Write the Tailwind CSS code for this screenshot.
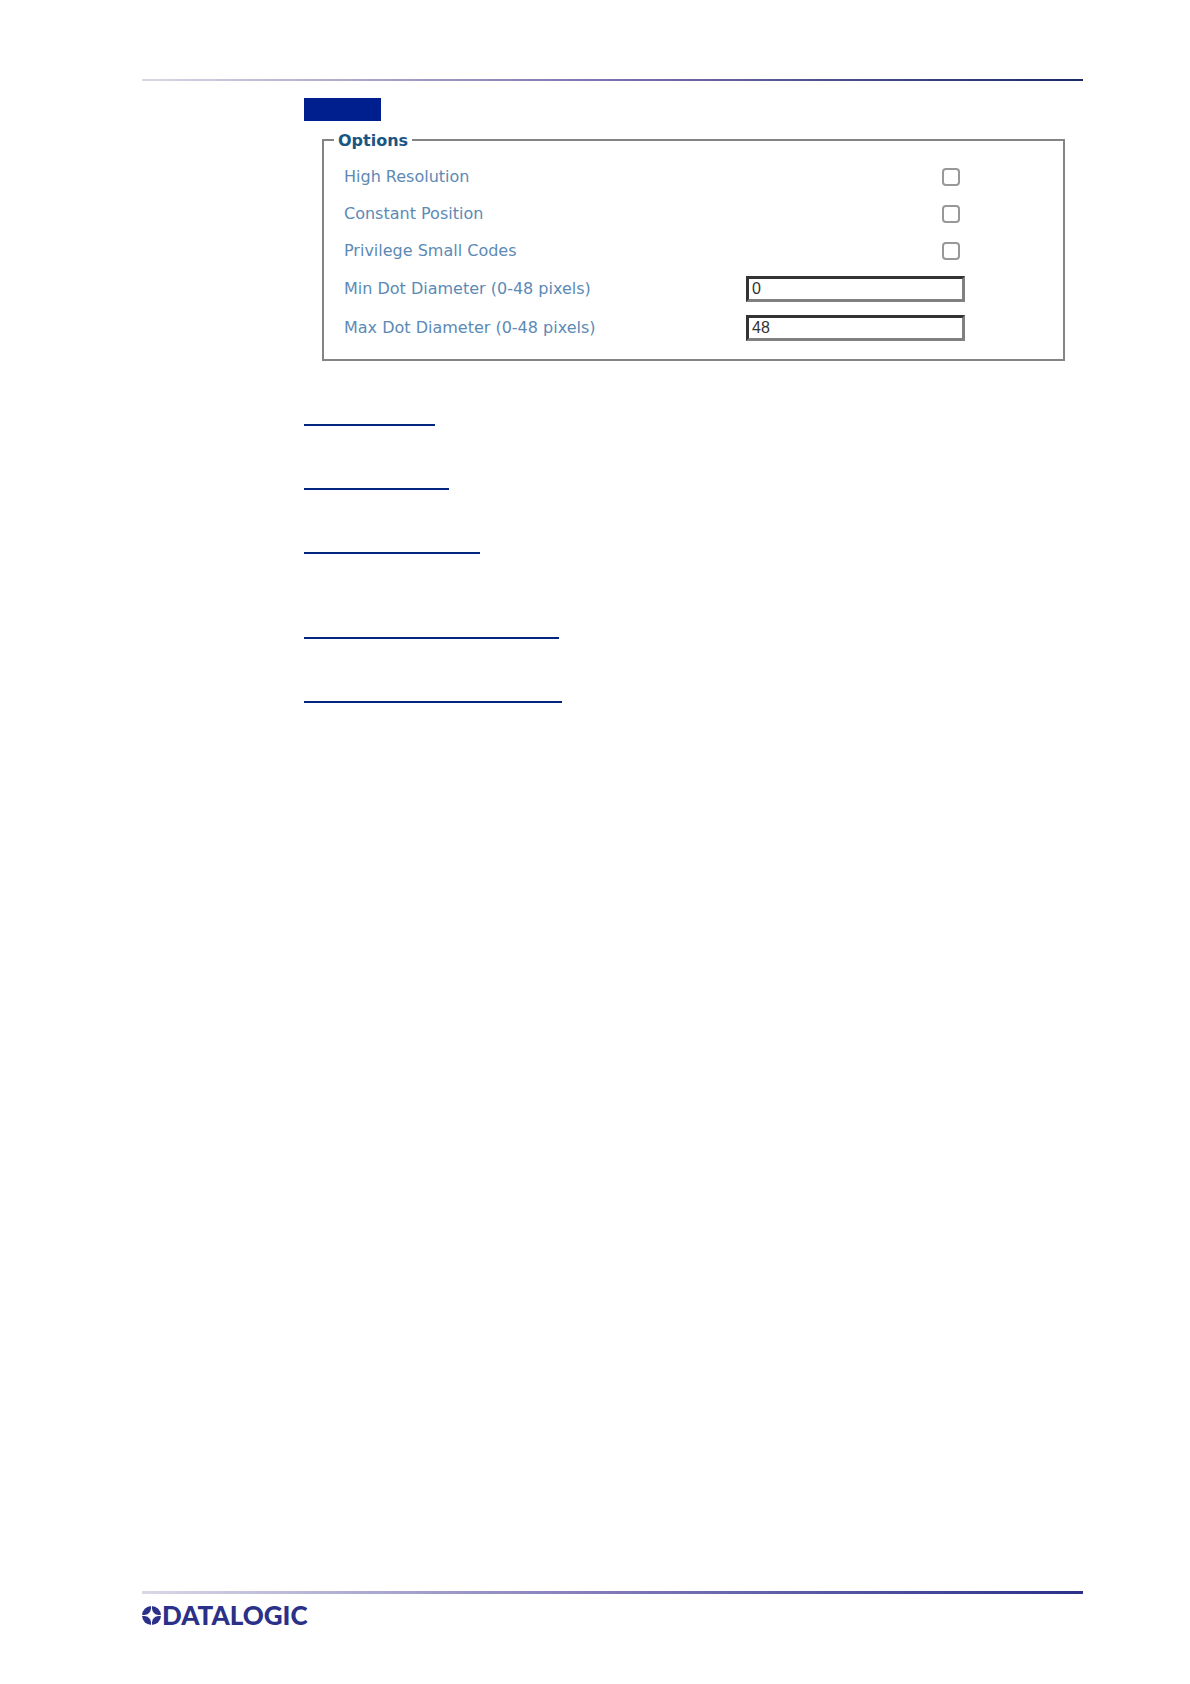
<!DOCTYPE html>
<html lang="en">
<head>
    <meta charset="UTF-8">
    <meta name="viewport" content="width=device-width, initial-scale=1.0">
    <title>Datalogic - Options</title>
    <script src="https://cdn.jsdelivr.net/npm/@tailwindcss/browser@4"></script>
</head>
<body class="bg-white">
<div class="min-h-screen flex flex-col pl-[142px] pr-[107px] pt-[79px] pb-[56px]">
    <header class="h-[2px] bg-linear-to-r from-[#d8d8e4] via-[#7c6fae] to-[#1b2a68]"></header>

    <main class="flex-1 pl-[162px] pt-[17px]">
        <div class="w-[77px] h-[23px] bg-[#001f8f]"></div>

        <form class="mt-2 ml-[18px] mr-[18px] font-['DejaVu_Sans',sans-serif] text-base text-[#5c8ab5]">
            <fieldset class="border-2 border-[#848484] pt-[7px] pb-3 pl-5 pr-[98px]">
                <legend class="-ml-[10px] px-1 pt-[2px] text-base leading-5 font-bold text-[#1b5583]">Options</legend>

                <div class="flex items-center justify-between h-[37px] pr-[5px]">
                    <label for="high_resolution">High Resolution</label>
                    <input type="checkbox" id="high_resolution" class="appearance-none size-[18px] rounded-sm border-2 border-[#989898] bg-white">
                </div>
                <div class="flex items-center justify-between h-[37px] pr-[5px]">
                    <label for="constant_position">Constant Position</label>
                    <input type="checkbox" id="constant_position" class="appearance-none size-[18px] rounded-sm border-2 border-[#989898] bg-white">
                </div>
                <div class="flex items-center justify-between h-[37px] pr-[5px]">
                    <label for="small_codes">Privilege Small Codes</label>
                    <input type="checkbox" id="small_codes" class="appearance-none size-[18px] rounded-sm border-2 border-[#989898] bg-white">
                </div>
                <div class="flex items-center justify-between h-[39px]">
                    <label for="min_dot">Min Dot Diameter (0-48 pixels)</label>
                    <input type="text" id="min_dot" value="0" class="w-[219px] h-[26px] border-3 border-t-[#333] border-l-[#333] border-r-[#808080] border-b-[#808080] px-[3px] font-['Liberation_Sans',sans-serif] text-base leading-5 text-[#333]">
                </div>
                <div class="flex items-center justify-between h-[39px]">
                    <label for="max_dot">Max Dot Diameter (0-48 pixels)</label>
                    <input type="text" id="max_dot" value="48" class="w-[219px] h-[26px] border-3 border-t-[#333] border-l-[#333] border-r-[#808080] border-b-[#808080] px-[3px] font-['Liberation_Sans',sans-serif] text-base leading-5 text-[#333]">
                </div>
            </fieldset>
        </form>

        <!-- Section rules -->
        <div class="mt-[63px] w-[131px] h-[2px] bg-[#00267f]"></div>
        <div class="mt-[62px] w-[145px] h-[2px] bg-[#00267f]"></div>
        <div class="mt-[62px] w-[176px] h-[2px] bg-[#00267f]"></div>
        <div class="mt-[83px] w-[255px] h-[2px] bg-[#00267f]"></div>
        <div class="mt-[62px] w-[258px] h-[2px] bg-[#00267f]"></div>
    </main>

    <footer>
        <div class="h-[3px] bg-linear-to-r from-[#d8d8e6] via-[#8078b8] to-[#2b3088]"></div>
        <div class="mt-2 flex items-center gap-[1px] text-[#2b3088]">
            <svg class="w-[19px] h-[19px]" viewBox="0 0 20 20" aria-hidden="true">
                <circle cx="10" cy="10" r="10" fill="currentColor"/>
                <path d="M10 0v20M0 10h20" stroke="#fff" stroke-width="1"/>
                <path d="M10 3Q11 9 17 10Q11 11 10 17Q9 11 3 10Q9 9 10 3Z" fill="#fff" stroke="#fff" stroke-width="1"/>
            </svg>
            <span class="font-[Lato,sans-serif] text-[26px] leading-[26px] font-black">DATALOGIC</span>
        </div>
    </footer>
</div>
</body>
</html>
